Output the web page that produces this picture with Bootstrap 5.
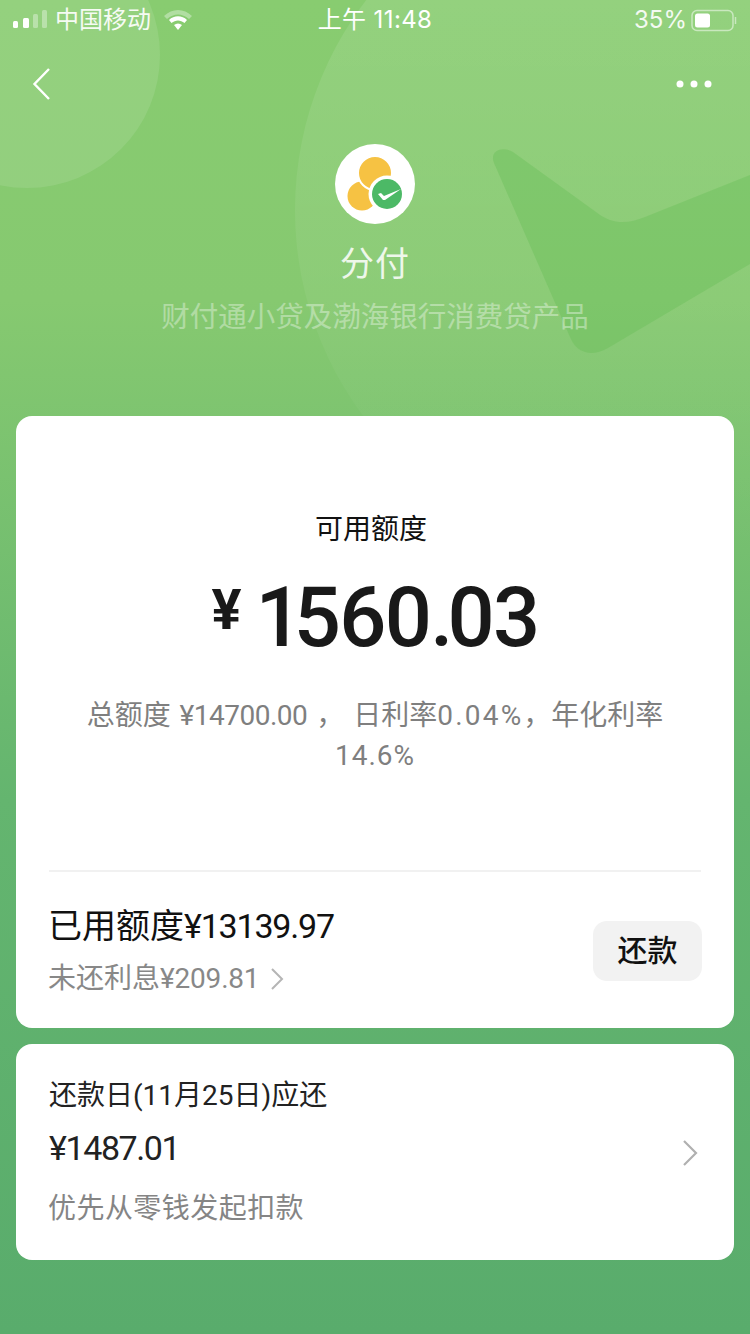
<!DOCTYPE html>
<html lang="zh">
<head>
<meta charset="utf-8">
<title>分付</title>
<link href="https://cdn.jsdelivr.net/npm/bootstrap@5.3.0/dist/css/bootstrap.min.css" rel="stylesheet">
<style>
html,body{height:100%}
body{width:750px;height:1334px;overflow:hidden;background:linear-gradient(180deg,#88cc70 0,#86c970 300px,#64b56f 800px,#59ac6c 1334px);font-family:Roboto,"Noto Sans CJK SC",sans-serif;color:#191919}
.stage{width:750px;height:1334px;position:relative;overflow:hidden}
.decor{position:absolute;left:0;top:0}
.front{position:relative}
.statusbar{height:40px;padding:0 13px 0 13px;color:#fff;font-family:Inter,"Noto Sans CJK SC",sans-serif;font-size:24px;line-height:40px}
.statusbar .carrier{font-size:24px;color:#fff;opacity:.92}
.statusbar .sideblock{width:250px}
.clock{font-size:24px;letter-spacing:.4px}
.batt{font-size:24px;opacity:.9;margin-right:-2px}
.topnav{height:87px;padding:0 38px 0 32px}
.logo-disc{width:80px;height:80px;margin-top:17px}
.prod-name{font-size:34px;line-height:50px;color:#fff;opacity:.85;margin-top:15px;letter-spacing:1px}
.prod-sub{font-size:28.5px;line-height:40px;color:#fff;opacity:.36;margin-top:9px}
.sheet{background:#fff;border:0;border-radius:16px;margin:0 16px}
.sheet-main{margin-top:78px;height:612px;padding:0 33px}
.lab{font-size:28px;line-height:40px;margin-top:94px;margin-right:8px;color:#111}
.amount{font-weight:500;font-size:83px;line-height:96px;margin-top:12px;color:#191919;letter-spacing:-1.6px}
.amount .one{letter-spacing:-9px}
.amount .dot{letter-spacing:-6px}
.amount .yen{font-size:56px;font-weight:700;vertical-align:17px;margin-right:14px;letter-spacing:0}
.note{font-size:28px;line-height:40px;color:#7f7f7f;margin-top:30px;height:80px;word-spacing:2px}
.num-tight{letter-spacing:-.5px}
.num-wide{letter-spacing:2.2px}
.num-wider{letter-spacing:1px}
.rule{border-top:2px solid #f1f1f1;margin-top:94px}
.used{font-size:34px;line-height:44px;color:#111;margin-left:-1px}
.used .fig{letter-spacing:-1.2px}
.interest{font-size:28px;line-height:40px;color:#888;margin-top:11px;margin-left:-1px}
.interest .fig{letter-spacing:-.2px}
.go-small{margin-left:3px}
.repay{width:109px;height:60px;background:#f2f2f2;border:0;border-radius:14px;font-size:30px;font-weight:500;color:#111;padding:0;margin:0 -1px 2px 0}
.btm{padding-top:32px}
.sheet-due{margin-top:16px;height:216px;padding:32px 33px 0}
.due-t{font-size:28px;line-height:40px;color:#222}
.due-a{font-size:34px;line-height:46px;color:#222;margin-top:9px;letter-spacing:-1.4px}
.due-n{font-size:28px;line-height:40px;color:#858585;margin-top:18px;letter-spacing:.45px;margin-left:-1px}
.due-go{margin-right:3px}
</style>
</head>
<body>
<div class="stage">
<svg class="decor" width="750" height="1334" viewBox="0 0 750 1334">
  <circle cx="27" cy="55" r="133" fill="#fff" opacity=".1"/>
  <defs><linearGradient id="fd" x1="0" y1="0" x2="0" y2="1"><stop offset="0" stop-color="#fff" stop-opacity=".12"/><stop offset=".55" stop-color="#fff" stop-opacity=".06"/><stop offset="1" stop-color="#fff" stop-opacity="0"/></linearGradient></defs>
  <circle cx="640" cy="210" r="345" fill="url(#fd)"/>
  <path d="M494 163C489 150 503 146 513 152L596 212C612 225 628 224 645 217L750 175V264L608 348C590 358 576 352 570 337Z" fill="#6abf58" opacity=".42"/>
</svg>
<div class="front">
  <div class="statusbar d-flex justify-content-between align-items-center">
    <div class="sideblock d-flex align-items-center gap-2">
      <svg width="34" height="24" viewBox="0 0 34 24"><rect x="0" y="13" width="5" height="7" rx="1.5" fill="#fff"/><rect x="10" y="10" width="6" height="10" rx="1.5" fill="#fff"/><rect x="20" y="6" width="5" height="14" rx="1.5" fill="#fff" opacity=".35"/><rect x="29" y="2" width="5" height="18" rx="1.5" fill="#fff" opacity=".35"/></svg>
      <span class="carrier">中国移动</span>
      <svg class="ms-1" width="30" height="24" viewBox="0 0 30 24"><path d="M1 8C9 0 21 0 29 8l-3 3C19 5 11 5 4 11Z" fill="#fff" opacity=".35"/><path d="M6 12c5-5 13-5 18 0l-2.500 3c-4-3.500-9-3.500-13 0Z" fill="#fff"/><path d="M11 17c2.500-2 5.500-2 8 0l-4 5Z" fill="#fff"/></svg>
    </div>
    <div class="clock">上午 11:48</div>
    <div class="sideblock d-flex justify-content-end align-items-center gap-1">
      <span class="batt">35%</span>
      <svg width="48" height="24" viewBox="0 0 48 24"><rect x="3" y="2.500" width="41" height="20" rx="5" fill="none" stroke="#fff" stroke-opacity=".5" stroke-width="1.500"/><rect x="6" y="5.500" width="15" height="14" rx="2.500" fill="#fff"/><path d="M46.500 9v7" stroke="#fff" stroke-opacity=".5" stroke-width="1.500"/></svg>
    </div>
  </div>
  <div class="topnav d-flex justify-content-between align-items-center">
    <svg width="20" height="34" viewBox="0 0 20 34"><path d="M17 2 2.500 17 17 32" fill="none" stroke="#fff" stroke-width="2.400"/></svg>
    <svg width="36" height="10" viewBox="0 0 36 10"><circle cx="4" cy="5" r="3.500" fill="#fff"/><circle cx="18" cy="5" r="3.500" fill="#fff"/><circle cx="32" cy="5" r="3.500" fill="#fff"/></svg>
  </div>
  <div class="d-flex flex-column align-items-center text-center">
    <div class="logo-disc">
      <svg width="80" height="80" viewBox="0 0 80 80">
        <circle cx="40" cy="40" r="40" fill="#fff"/>
        <circle cx="27" cy="52" r="14.500" fill="#f6c243"/>
        <circle cx="40" cy="29" r="17" fill="#f6c243" stroke="#fff" stroke-width="2"/>
        <circle cx="52" cy="50" r="18.500" fill="#fff"/>
        <circle cx="52" cy="50" r="15" fill="#4cb966"/>
        <path d="M43 50l3-1 3 3 17-7-16 11h-2Z" fill="#fff"/>
      </svg>
    </div>
    <div class="prod-name">分付</div>
    <div class="prod-sub">财付通小贷及渤海银行消费贷产品</div>
  </div>
  <div class="card sheet sheet-main">
    <div class="text-center lab">可用额度</div>
    <div class="text-center amount"><span class="yen">¥</span><span class="one">1</span>560<span class="dot">.</span>03</div>
    <div class="text-center note">总额度 <span class="num-tight">¥14700.00</span> ， 日利率<span class="num-wide">0.04%</span>，年化利率<br><span class="num-wider">14.6%</span></div>
    <div class="rule"></div>
    <div class="d-flex justify-content-between align-items-center btm">
      <div>
        <div class="used">已用额度<span class="fig">¥13139.97</span></div>
        <div class="interest d-flex align-items-center gap-2"><span>未还利息<span class="fig">¥209.81</span></span>
          <svg class="go-small" width="14" height="24" viewBox="0 0 14 24"><path d="M2 2l10 10L2 22" fill="none" stroke="#b5b5b5" stroke-width="2"/></svg>
        </div>
      </div>
      <button type="button" class="btn repay">还款</button>
    </div>
  </div>
  <div class="card sheet sheet-due">
    <div class="d-flex justify-content-between align-items-center">
      <div>
        <div class="due-t">还款日(11月25日)应还</div>
        <div class="due-a">¥1487.01</div>
        <div class="due-n">优先从零钱发起扣款</div>
      </div>
      <svg class="due-go" width="16" height="28" viewBox="0 0 16 28"><path d="M2 2l12 12L2 26" fill="none" stroke="#b0b0b0" stroke-width="2.200"/></svg>
    </div>
  </div>
</div>
</div>
<script src="https://cdn.jsdelivr.net/npm/bootstrap@5.3.0/dist/js/bootstrap.bundle.min.js"></script>
</body>
</html>
